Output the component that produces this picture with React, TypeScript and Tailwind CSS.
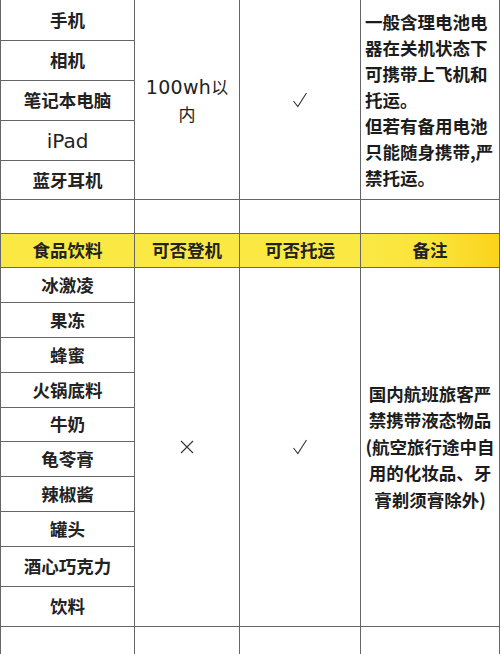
import React from "react";

const line = "border-l border-b border-[#666]";
const center = "flex items-center justify-center";
const cjk = "font-['Noto_Sans_CJK_SC','Noto_Sans',sans-serif]";

function Check() {
  return (
    <svg width="16" height="16" viewBox="0 0 16 16" fill="none">
      <path d="M1.5 9 L5.8 14.5 L14.5 1" stroke="#333" strokeWidth="1.1" strokeLinejoin="miter" />
    </svg>
  );
}

function Cross() {
  return (
    <svg width="14" height="14" viewBox="0 0 14 14" fill="none">
      <path d="M1 1 L13 13 M13 1 L1 13" stroke="#333" strokeWidth="1.1" />
    </svg>
  );
}

function Label({ children }: { children: React.ReactNode }) {
  return (
    <div className={`${line} ${center} text-[17.5px] font-bold text-[#222] ${cjk}`}>
      {children}
    </div>
  );
}

function Header({ children, last }: { children: React.ReactNode; last?: boolean }) {
  return (
    <div
      className={`${line} ${center} text-[17.5px] font-bold text-[#222] ${cjk} ${
        last ? "bg-linear-to-r from-[#fbe843] via-[#fbe43a] to-[#fbd31a]" : "bg-[#fbe843]"
      }`}
    >
      {children}
    </div>
  );
}

export default function App() {
  const electronics = ["手机", "相机", "笔记本电脑", "iPad", "蓝牙耳机"];
  const foods = ["冰激凌", "果冻", "蜂蜜", "火锅底料", "牛奶", "龟苓膏", "辣椒酱", "罐头", "酒心巧克力", "饮料"];
  return (
    <div className="w-[500px] h-[654px] overflow-hidden bg-white border-r border-[#666]">
      <div className="grid grid-cols-[134px_105px_121px_139px] grid-rows-[41px_40px_40px_40px_39px_34px_34px_35px_35px_35px_35px_34px_35px_35px_35px_40px_40px_40px]">
        {/* electronics block */}
        <Label>{electronics[0]}</Label>
        <div className={`${line} ${center} row-span-5 flex-col text-[#222]`}>
          <div className="leading-[25px] text-center whitespace-nowrap">
            <span className="font-['DejaVu_Sans',sans-serif] text-[19px] font-normal tracking-[0.3px]">100wh</span>
            <span className={`${cjk} text-[17px]`}>以</span>
          </div>
          <div className={`${cjk} text-[17px] leading-[25px]`}>内</div>
        </div>
        <div className={`${line} ${center} row-span-5`}>
          <Check />
        </div>
        <div className={`${line} row-span-5 flex flex-col justify-center pl-[4px] text-[17.5px] font-bold leading-[26px] text-[#1c1c1c] whitespace-nowrap ${cjk}`}>
          <div>一般含理电池电</div>
          <div>器在关机状态下</div>
          <div>可携带上飞机和</div>
          <div>托运。</div>
          <div>但若有备用电池</div>
          <div>只能随身携带,严</div>
          <div>禁托运。</div>
        </div>
        <Label>{electronics[1]}</Label>
        <Label>{electronics[2]}</Label>
        <div className={`${line} ${center} font-['DejaVu_Sans',sans-serif] text-[20px] font-normal text-[#222]`}>iPad</div>
        <Label>{electronics[4]}</Label>

        {/* empty row */}
        <div className={line} />
        <div className={line} />
        <div className={line} />
        <div className={line} />

        {/* header */}
        <Header>食品饮料</Header>
        <Header>可否登机</Header>
        <Header>可否托运</Header>
        <Header last>备注</Header>

        {/* foods block */}
        <Label>{foods[0]}</Label>
        <div className={`${line} ${center} row-span-10`}>
          <Cross />
        </div>
        <div className={`${line} ${center} row-span-10`}>
          <Check />
        </div>
        <div className={`${line} row-span-10 flex flex-col items-center justify-center text-[17.5px] font-bold leading-[26.5px] text-[#1c1c1c] whitespace-nowrap ${cjk}`}>
          <div>国内航班旅客严</div>
          <div>禁携带液态物品</div>
          <div>(航空旅行途中自</div>
          <div>用的化妆品、牙</div>
          <div>膏剃须膏除外)</div>
        </div>
        {foods.slice(1).map((f) => (
          <Label key={f}>{f}</Label>
        ))}

        {/* bottom empty row */}
        <div className={line} />
        <div className={line} />
        <div className={line} />
        <div className={line} />
      </div>
    </div>
  );
}
